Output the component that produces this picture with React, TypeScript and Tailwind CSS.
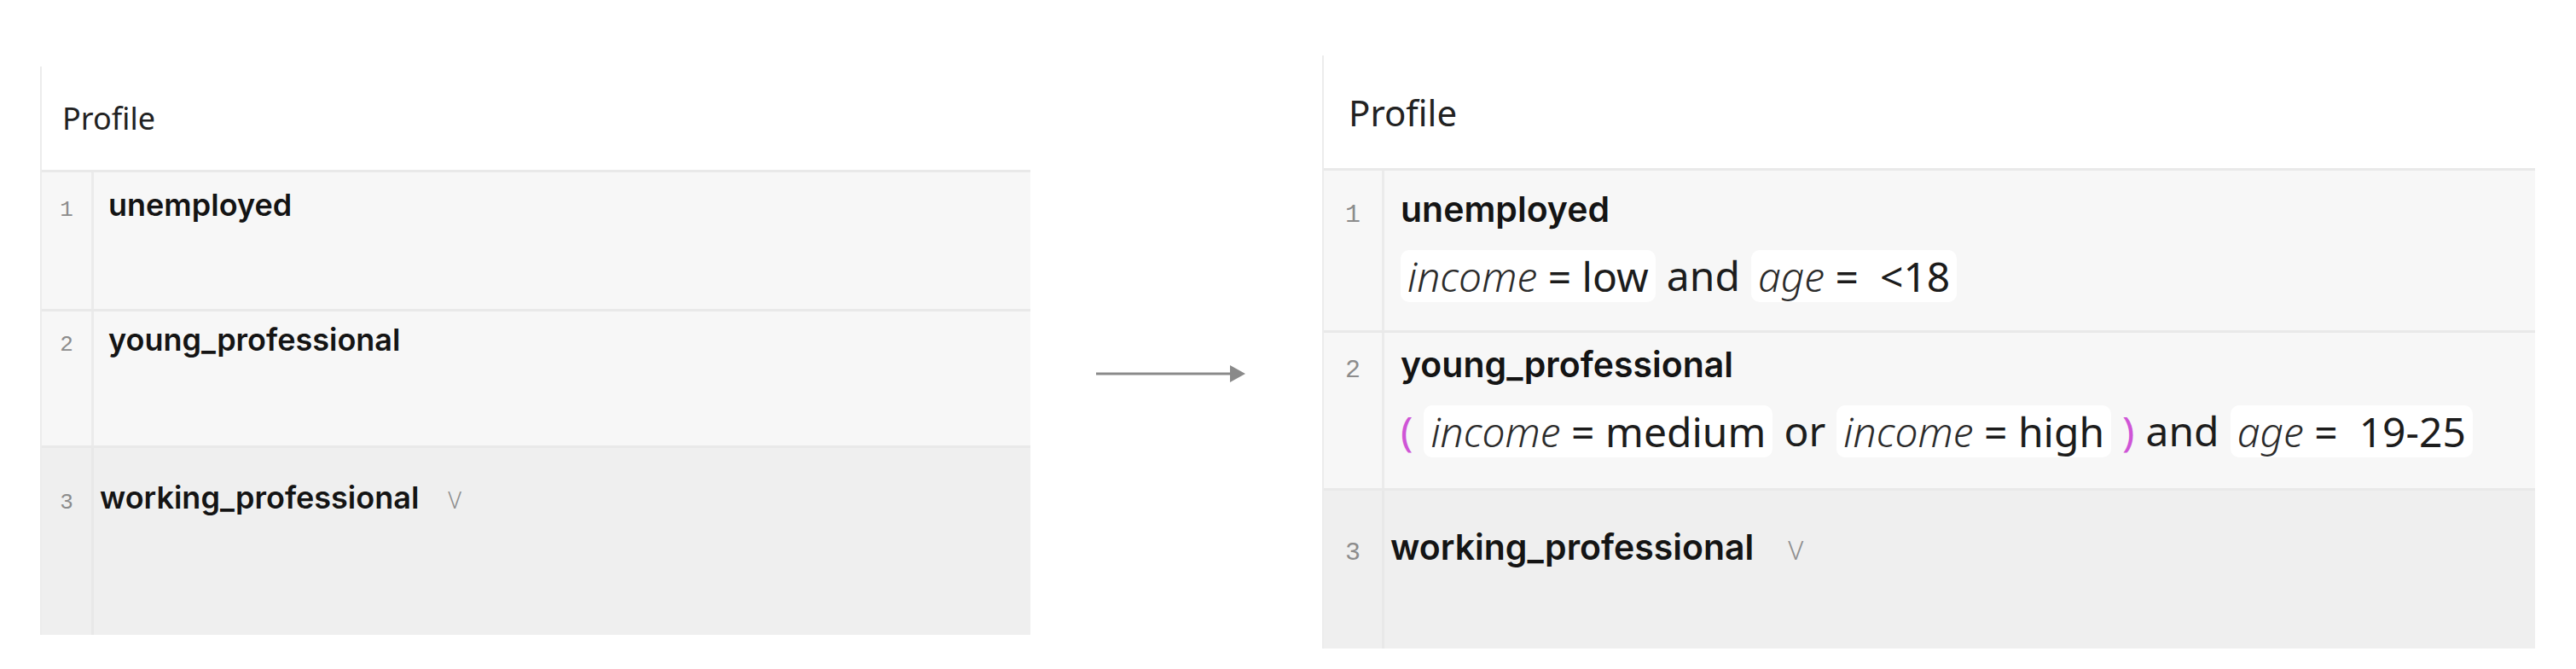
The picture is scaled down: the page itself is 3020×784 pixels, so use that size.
import React from 'react';

const nameFont = { fontFamily: 'Inter, "Open Sans", sans-serif' };
const plexFont = { fontFamily: '"Noto Sans", "Open Sans", sans-serif' };
const monoFont = { fontFamily: '"Liberation Mono", "DejaVu Sans Mono", monospace' };

const Chip = ({ field, value, wide }: { field: string; value: string; wide?: boolean }) => (
  <span className="inline-block h-[61px] rounded-[10px] bg-white px-[8px] leading-[61px] whitespace-pre">
    <span className="font-light italic text-[#2b2b2b]">{field}</span>
    <span>{wide ? ' =  ' : ' = '}</span>
    <span>{value}</span>
  </span>
);

const Paren = ({ children }: { children: React.ReactNode }) => (
  <span className="text-[#cf55d6]">{children}</span>
);

const Chevron = ({ className }: { className: string }) => (
  <span className={`font-light text-[#8f8f8f] ${className}`} style={plexFont}>
    V
  </span>
);

const Arrow = () => (
  <svg width="175" height="22" viewBox="0 0 175 22" className="block">
    <line x1="0" y1="11" x2="158" y2="11" stroke="#8a8a8a" strokeWidth="3" />
    <polygon points="157,1 175,11 157,21" fill="#8a8a8a" />
  </svg>
);

const LeftPanel = () => (
  <div className="mt-[78px] w-[1161px] shrink-0 border-l-2 border-[#ececec]">
    <div className="flex h-[121px] items-center bg-white pl-[24px] text-[36px] text-[#222]" style={plexFont}>
      Profile
    </div>
    <div className="h-[3px] bg-[#e9e9e9]" />

    <div className="flex h-[160px] bg-[#f7f7f7]">
      <div className="w-[61px] border-r-[3px] border-[#ebebeb] pt-[23px] text-center text-[26px] leading-[42px] text-[#8c8c8c]" style={monoFont}>
        1
      </div>
      <div className="pl-[17px] pt-[17px] text-[36px] font-semibold leading-[42px] text-[#141414]" style={nameFont}>
        unemployed
      </div>
    </div>
    <div className="h-[3px] bg-[#e9e9e9]" />

    <div className="flex h-[157px] bg-[#f7f7f7]">
      <div className="w-[61px] border-r-[3px] border-[#ebebeb] pt-[18px] text-center text-[26px] leading-[42px] text-[#8c8c8c]" style={monoFont}>
        2
      </div>
      <div className="pl-[17px] pt-[12px] text-[36px] font-semibold leading-[42px] text-[#141414]" style={nameFont}>
        young_professional
      </div>
    </div>
    <div className="h-[3px] bg-[#e9e9e9]" />

    <div className="flex h-[219px] bg-[#efefef]">
      <div className="w-[61px] border-r-[3px] border-[#e8e8e8] pt-[43px] text-center text-[26px] leading-[42px] text-[#8c8c8c]" style={monoFont}>
        3
      </div>
      <div className="flex items-baseline pl-[7px] pt-[37px] text-[36px] font-semibold leading-[42px] text-[#141414]" style={nameFont}>
        working_professional
        <Chevron className="ml-[34px] text-[27px]" />
      </div>
    </div>
  </div>
);

const RightPanel = () => (
  <div className="mt-[65px] w-[1422px] shrink-0 border-l-2 border-[#ececec]">
    <div className="flex h-[132px] items-center bg-white pl-[29px] text-[42px] text-[#222]" style={plexFont}>
      Profile
    </div>
    <div className="h-[3px] bg-[#e9e9e9]" />

    <div className="flex h-[187px] bg-[#f7f7f7]">
      <div className="w-[71px] border-r-[3px] border-[#ebebeb] pt-[28px] text-center text-[30px] leading-[48px] text-[#8c8c8c]" style={monoFont}>
        1
      </div>
      <div className="pl-[19px] pt-[21px]">
        <div className="text-[41px] font-semibold leading-[48px] text-[#141414]" style={nameFont}>
          unemployed
        </div>
        <div className="mt-[18px] flex items-center gap-[13px] text-[48px] text-[#1c1c1c]" style={plexFont}>
          <Chip field="income" value="low" />
          <span>and</span>
          <Chip field="age" value="<18" wide />
        </div>
      </div>
    </div>
    <div className="h-[3px] bg-[#e9e9e9]" />

    <div className="flex h-[182px] bg-[#f7f7f7]">
      <div className="w-[71px] border-r-[3px] border-[#ebebeb] pt-[20px] text-center text-[30px] leading-[48px] text-[#8c8c8c]" style={monoFont}>
        2
      </div>
      <div className="pl-[19px] pt-[13px]">
        <div className="text-[41px] font-semibold leading-[48px] text-[#141414]" style={nameFont}>
          young_professional
        </div>
        <div className="mt-[18px] flex items-center gap-[13px] text-[48px] text-[#1c1c1c]" style={plexFont}>
          <Paren>(</Paren>
          <Chip field="income" value="medium" />
          <span>or</span>
          <Chip field="income" value="high" />
          <Paren>)</Paren>
          <span>and</span>
          <Chip field="age" value="19-25" wide />
        </div>
      </div>
    </div>
    <div className="h-[3px] bg-[#e9e9e9]" />

    <div className="flex h-[185px] bg-[#efefef]">
      <div className="w-[71px] border-r-[3px] border-[#e8e8e8] pt-[49px] text-center text-[30px] leading-[48px] text-[#8c8c8c]" style={monoFont}>
        3
      </div>
      <div className="flex items-baseline pl-[7px] pt-[42px] text-[41px] font-semibold leading-[48px] text-[#141414]" style={nameFont}>
        working_professional
        <Chevron className="ml-[40px] text-[31px]" />
      </div>
    </div>
  </div>
);

export default function App() {
  return (
    <div className="flex h-[784px] w-[3020px] items-start bg-white pl-[47px]">
      <LeftPanel />
      <div className="ml-[77px] mt-[427px] shrink-0">
        <Arrow />
      </div>
      <div className="ml-[90px]">
        <RightPanel />
      </div>
    </div>
  );
}
